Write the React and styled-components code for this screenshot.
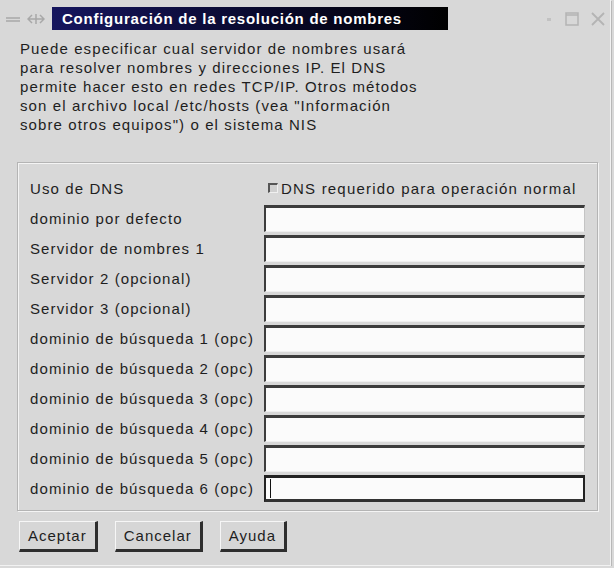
import React from 'react'
import styled, { createGlobalStyle } from 'styled-components';

const Global = createGlobalStyle`
body {
  margin: 0;
  background: #d9d9d9;
  font-family: "Liberation Sans", Arial, sans-serif;
}
`

const Window = styled.div`
width: 610px;
height: 565px;
background: #d8d8d8;
border-right: 1px solid #f2f2f2;
border-bottom: 1px solid #f2f2f2;
box-shadow: 1px 1px 0 #b8b8b8;
display: flex;
flex-direction: column;
color: #1e1e1e;
`

const TitleRow = styled.div`
display: flex;
align-items: center;
height: 23px;
margin-top: 7px;
`

const LeftIcons = styled.div`
width: 52px;
display: flex;
align-items: center;
gap: 6px;
padding-left: 5px;
box-sizing: border-box;
`

const TitleBar = styled.div`
width: 396px;
height: 23px;
background: linear-gradient(to right, #16165e 0%, #0b0b34 45%, #000 100%);
color: #fff;
font-weight: bold;
font-size: 15px;
letter-spacing: 0.75px;
line-height: 23px;
padding-left: 10px;
box-sizing: border-box;
white-space: nowrap;
`

const RightIcons = styled.div`
flex: 1;
display: flex;
align-items: center;
justify-content: flex-end;
gap: 10px;
padding-right: 4px;
`

const Description = styled.div`
padding: 9px 20px 0;
height: 132px;
box-sizing: border-box;
font-size: 15px;
line-height: 19px;
letter-spacing: 1.1px;
white-space: nowrap;
`

const Group = styled.div`
margin-left: 17px;
width: 581px;
box-sizing: border-box;
border: 1px solid #b4b4b4;
box-shadow: inset 1px 1px 0 #f4f4f4, 1px 1px 0 #f4f4f4;
padding: 10px 12px 7px 12px;
display: grid;
grid-template-columns: 234px 321px;
grid-auto-rows: 30px;
`

const Label = styled.div`
font-size: 15px;
letter-spacing: 1.1px;
display: flex;
align-items: center;
white-space: nowrap;
`

const CheckLabel = styled.label`
display: flex;
align-items: center;
gap: 3px;
font-size: 15px;
letter-spacing: 1.2px;
white-space: nowrap;
padding-left: 4px;
`

const Check = styled.span`
width: 7px;
height: 7px;
border-top: 2px solid #555;
border-left: 2px solid #555;
border-right: 1px solid #f0f0f0;
border-bottom: 1px solid #f0f0f0;
background: #d0d0d0;
`

const Field = styled.div`
align-self: center;
height: 27px;
box-sizing: border-box;
background: #fbfbfb;
border-top: 3px solid ${p => p.focused ? '#222' : '#3c3c3c'};
border-left: 2px solid ${p => p.focused ? '#222' : '#3c3c3c'};
border-right: ${p => p.focused ? '2px solid #222' : '1px solid #c4c4c4'};
border-bottom: ${p => p.focused ? '3px solid #333' : '1px solid #efefef'};
display: flex;
align-items: center;
padding-left: 4px;
`

const Caret = styled.span`
width: 1px;
height: 19px;
background: #111;
`

const Buttons = styled.div`
display: flex;
gap: 17px;
padding: 10px 0 0 19px;
`

const Button = styled.button`
height: 31px;
padding: 0 8px;
font-family: "Liberation Sans", Arial, sans-serif;
font-size: 15px;
letter-spacing: 1px;
color: #1e1e1e;
background: #d6d6d6;
border-top: 1px solid #f6f6f6;
border-left: 1px solid #f6f6f6;
border-right: 3px solid #2e2e2e;
border-bottom: 3px solid #2e2e2e;
`

const rows = [
  'dominio por defecto',
  'Servidor de nombres 1',
  'Servidor 2 (opcional)',
  'Servidor 3 (opcional)',
  'dominio de búsqueda 1 (opc)',
  'dominio de búsqueda 2 (opc)',
  'dominio de búsqueda 3 (opc)',
  'dominio de búsqueda 4 (opc)',
  'dominio de búsqueda 5 (opc)',
  'dominio de búsqueda 6 (opc)',
]

const App = () => {
    return (
        <Window>
            <Global />
            <TitleRow>
                <LeftIcons>
                    <svg width="16" height="10" viewBox="0 0 16 10">
                        <path d="M1 4h14M1 7h14" stroke="#a8a8a8" strokeWidth="1.5" />
                    </svg>
                    <svg width="18" height="14" viewBox="0 0 18 14">
                        <path d="M1 7h16M5 3l-4 4 4 4M13 3l4 4-4 4M9 2v10" stroke="#a8a8a8" strokeWidth="1.5" fill="none" />
                    </svg>
                </LeftIcons>
                <TitleBar>Configuración de la resolución de nombres</TitleBar>
                <RightIcons>
                    <svg width="10" height="10" viewBox="0 0 10 10">
                        <rect x="3" y="4" width="4" height="3" fill="#c2c2c2" />
                    </svg>
                    <svg width="16" height="16" viewBox="0 0 16 16">
                        <rect x="2" y="2" width="12" height="12" fill="none" stroke="#b4b4b4" strokeWidth="1.5" />
                        <path d="M2 4h12" stroke="#b4b4b4" strokeWidth="1.5" />
                    </svg>
                    <svg width="16" height="16" viewBox="0 0 16 16">
                        <path d="M2 2l12 12M14 2L2 14" stroke="#b4b4b4" strokeWidth="1.8" />
                    </svg>
                </RightIcons>
            </TitleRow>
            <Description>
                Puede especificar cual servidor de nombres usará<br />
                para resolver nombres y direcciones IP. El DNS<br />
                permite hacer esto en redes TCP/IP. Otros métodos<br />
                son el archivo local /etc/hosts (vea "Información<br />
                sobre otros equipos") o el sistema NIS
            </Description>
            <Group>
                <Label>Uso de DNS</Label>
                <CheckLabel><Check />DNS requerido para operación normal</CheckLabel>
                {rows.map((r, i) => (
                    <React.Fragment key={r}>
                        <Label>{r}</Label>
                        <Field focused={i === rows.length - 1}>
                            {i === rows.length - 1 && <Caret />}
                        </Field>
                    </React.Fragment>
                ))}
            </Group>
            <Buttons>
                <Button>Aceptar</Button>
                <Button>Cancelar</Button>
                <Button>Ayuda</Button>
            </Buttons>
        </Window>
    );
};

export default App;
